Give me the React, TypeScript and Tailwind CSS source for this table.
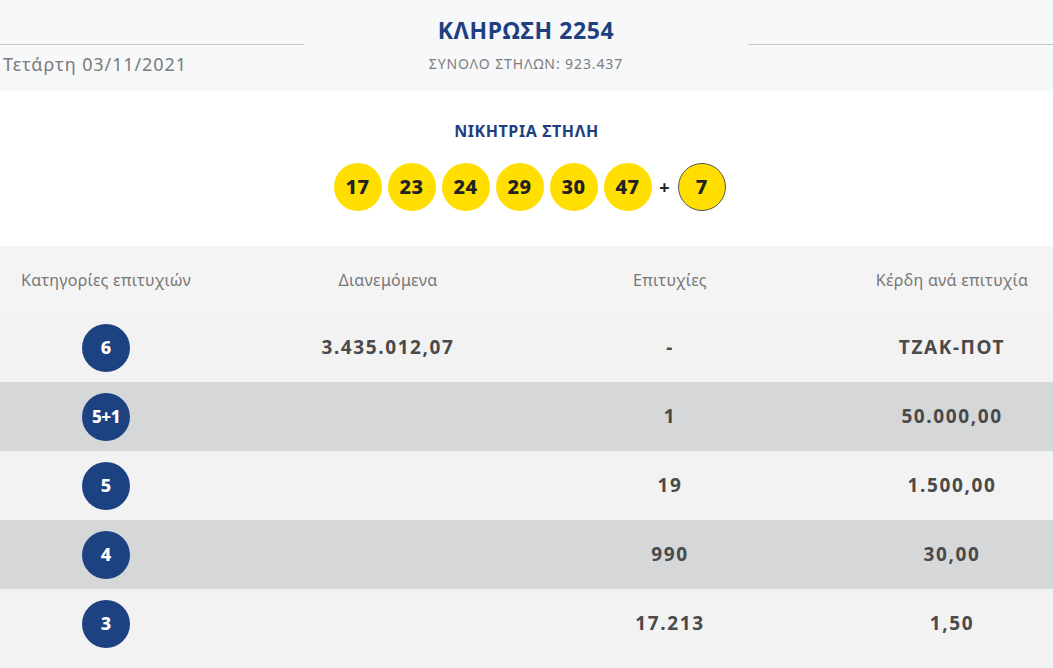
import React from "react";

const balls = ["17", "23", "24", "29", "30", "47"];

const rows = [
  { cat: "6", dist: "3.435.012,07", wins: "-", prize: "ΤΖΑΚ-ΠΟΤ", dark: false },
  { cat: "5+1", dist: "", wins: "1", prize: "50.000,00", dark: true },
  { cat: "5", dist: "", wins: "19", prize: "1.500,00", dark: false },
  { cat: "4", dist: "", wins: "990", prize: "30,00", dark: true },
  { cat: "3", dist: "", wins: "17.213", prize: "1,50", dark: false },
];

export default function App() {
  return (
    <div
      className="w-[1053px] h-[668px] overflow-hidden bg-white"
      style={{ fontFamily: '"Noto Sans", "DejaVu Sans", sans-serif' }}
    >
      {/* Header */}
      <div className="h-[91px] bg-[#f7f8fa] flex">
        <div className="w-[304px] flex flex-col pt-[44px]">
          <div className="h-px bg-[#c4c6c9]" />
          <div className="pl-[3px] pt-[8px] text-[18px] text-[#7b7b7b] leading-[22px] tracking-[0.9px]">
            Τετάρτη 03/11/2021
          </div>
        </div>
        <div className="flex-1 flex flex-col items-center pt-[15px]">
          <div className="text-[23px] font-bold text-[#1e4080] leading-[30px] tracking-[0.6px]">
            ΚΛΗΡΩΣΗ 2254
          </div>
          <div className="pt-[10px] text-[14px] text-[#7d7d7d] leading-[18px] tracking-[0.9px]">
            ΣΥΝΟΛΟ ΣΤΗΛΩΝ: 923.437
          </div>
        </div>
        <div className="w-[305px] pt-[44px]">
          <div className="h-px bg-[#c4c6c9]" />
        </div>
      </div>

      {/* Winning column */}
      <div className="h-[155px] flex flex-col items-center pt-[29px]">
        <div className="text-[16px] font-bold text-[#1e4080] leading-[22px] tracking-[0.6px]">
          ΝΙΚΗΤΡΙΑ ΣΤΗΛΗ
        </div>
        <div className="flex items-center gap-[6px] mt-[21px] ml-[6px]">
          {balls.map((b) => (
            <div
              key={b}
              className="w-[48px] h-[48px] rounded-full bg-[#ffde00] flex items-center justify-center text-[20px] font-extrabold text-[#222] tracking-[0.5px]"
            >
              {b}
            </div>
          ))}
          <div className="w-[14px] text-center text-[18px] font-bold text-[#222]">+</div>
          <div className="w-[48px] h-[48px] rounded-full bg-[#ffde00] border-[1.5px] border-[#555] flex items-center justify-center text-[20px] font-extrabold text-[#222]">
            7
          </div>
        </div>
      </div>

      {/* Table */}
      <div className="ml-[-35px] w-[1128px] bg-[#f2f2f2] h-[422px]">
        <div className="grid grid-cols-4 h-[67px] bg-[#f4f4f4] items-center text-[16px] text-[#777] tracking-[0.3px]">
          <div className="text-center">Κατηγορίες επιτυχιών</div>
          <div className="text-center">Διανεμόμενα</div>
          <div className="text-center">Επιτυχίες</div>
          <div className="text-center">Κέρδη ανά επιτυχία</div>
        </div>
        {rows.map((r) => (
          <div
            key={r.cat}
            className={`grid grid-cols-4 h-[69px] items-center text-[19px] font-bold text-[#4a4a4a] tracking-[1.6px] ${
              r.dark ? "bg-[#d6d7d9]" : "bg-[#f2f2f2]"
            }`}
          >
            <div className="flex justify-center">
              <div
                className={`w-[48px] h-[48px] rounded-full bg-[#1d4282] flex items-center justify-center text-white font-extrabold ${
                  r.cat.length > 1 ? "text-[17px] tracking-[-0.5px]" : "text-[18px] tracking-normal"
                }`}
              >
                {r.cat}
              </div>
            </div>
            <div className="text-center">{r.dist}</div>
            <div className="text-center">{r.wins}</div>
            <div className="text-center">{r.prize}</div>
          </div>
        ))}
      </div>
    </div>
  );
}
